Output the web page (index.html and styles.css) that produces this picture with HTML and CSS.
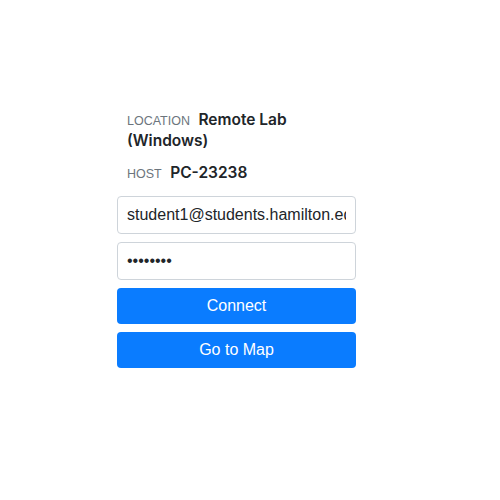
FILE: index.html
```html
<!DOCTYPE html>
<html lang="en">
<head>
    <meta charset="UTF-8">
    <meta name="viewport" content="width=device-width, initial-scale=1.0">
    <title>Connect</title>
    <link rel="stylesheet" href="styles.css">
</head>
<body>
    <div class="panel">
        <div class="info">
            <div class="info-row">
                <span class="info-label">Location</span>
                <span class="info-value">Remote Lab (Windows)</span>
            </div>
            <div class="info-row">
                <span class="info-label">Host</span>
                <span class="info-value">PC-23238</span>
            </div>
        </div>
        <form class="login">
            <input type="text" class="field" value="student1@students.hamilton.edu">
            <input type="password" class="field" value="password">
            <button type="button" class="btn">Connect</button>
            <button type="button" class="btn">Go to Map</button>
        </form>
    </div>
</body>
</html>
```

FILE: styles.css
```css
body {
    margin: 0;
    background: #fff;
    font-family: "Liberation Sans", Arial, sans-serif;
    color: #212529;
}
.panel {
    width: 239px;
    margin-left: 117px;
    padding-top: 110px;
}
.info {
    padding-left: 10px;
    padding-right: 8px;
}
.info-row {
    margin-bottom: 12px;
    line-height: 20px;
}
.info-label {
    font-family: "Liberation Sans", Arial, sans-serif;
    text-transform: uppercase;
    font-size: 12.5px;
    color: #6c757d;
    margin-right: 4px;
}
.info-value {
    font-family: Inter, sans-serif;
    font-weight: 600;
    font-size: 15.5px;
    color: #212529;
}
.login {
    display: flex;
    flex-direction: column;
    gap: 8px;
}
.field {
    box-sizing: border-box;
    width: 100%;
    height: 38px;
    padding: 6px 9px;
    border: 1px solid #ced4da;
    border-radius: 4px;
    font-family: "Liberation Sans", Arial, sans-serif;
    font-size: 16px;
    color: #212529;
    background: #fff;
}
.btn {
    height: 36px;
    border: none;
    border-radius: 4px;
    background-color: #0a7cff;
    color: #fff;
    font-family: "Liberation Sans", Arial, sans-serif;
    font-size: 16px;
    cursor: pointer;
}
.btn:hover {
    background-color: #0062cc;
}
```
